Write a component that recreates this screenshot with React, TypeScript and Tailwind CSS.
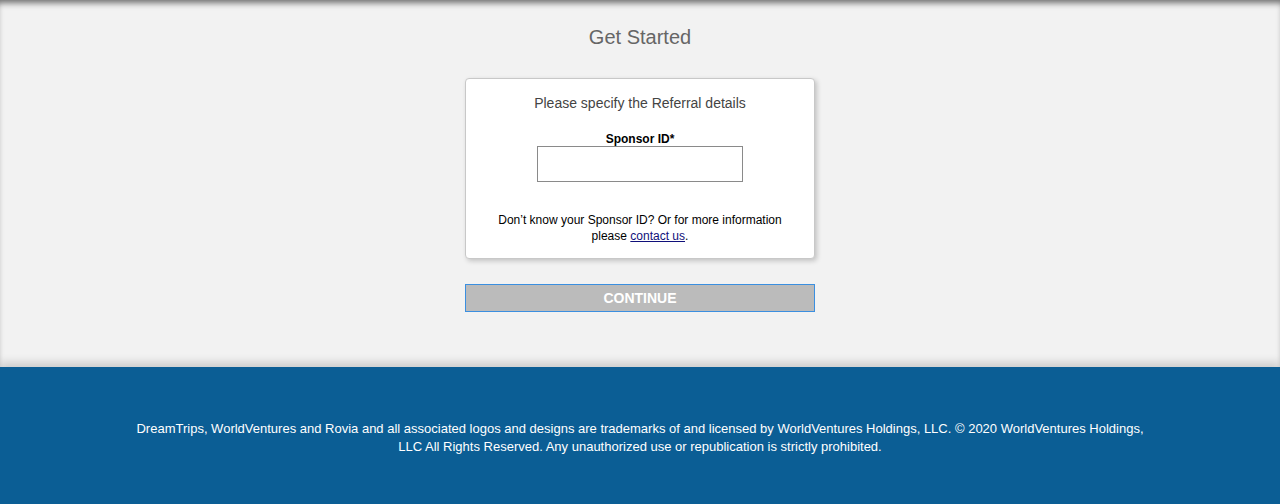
export default function App() {
  return (
    <div className="min-h-[504px] bg-[#f2f2f2] font-['Liberation_Sans',Arial,sans-serif]">
      <main className="relative h-[367px] bg-[#f2f2f2] pt-[25px] shadow-[inset_0_6px_6px_-3px_rgba(0,0,0,0.55)]">
        <h1 className="text-center text-[20px] leading-[24px] text-[#666666]">Get Started</h1>

        <div className="mx-auto mt-[29px] w-[350px] rounded-[4px] border border-[#c8c8c8] bg-white px-4 pb-[14px] pt-[16px] text-center shadow-[2px_2px_5px_rgba(0,0,0,0.2)]">
          <p className="text-[14px] leading-[17px] text-[#444444]">Please specify the Referral details</p>

          <label className="mt-[20px] block text-[12px] font-bold leading-[14px] text-black">Sponsor ID*</label>
          <input
            type="text"
            className="mx-auto block h-[36px] w-[206px] border border-[#8a8a8a] bg-white px-2 text-[13px] outline-none"
          />

          <p className="mt-[30px] text-[12px] leading-[16px] text-black">
            Don’t know your Sponsor ID? Or for more information
            <br />
            please{" "}
            <a href="#" className="text-[#10107a] underline">
              contact us
            </a>
            .
          </p>
        </div>

        <button
          type="button"
          className="mx-auto mt-[25px] block h-[28px] w-[350px] border border-[#3b8fe0] bg-[#bbbbbb] text-[14px] font-bold leading-[26px] text-white"
        >
          CONTINUE
        </button>
      </main>

      <footer className="relative h-[137px] bg-[#0b5e95] pt-[53px] shadow-[0_-5px_8px_rgba(0,0,0,0.15)]">
        <p className="mx-auto max-w-[1024px] text-center text-[13px] leading-[18px] text-white">
          DreamTrips, WorldVentures and Rovia and all associated logos and designs are trademarks of and licensed by
          WorldVentures Holdings, LLC. © 2020 WorldVentures Holdings, LLC All Rights Reserved. Any unauthorized use or
          republication is strictly prohibited.
        </p>
      </footer>
    </div>
  );
}
